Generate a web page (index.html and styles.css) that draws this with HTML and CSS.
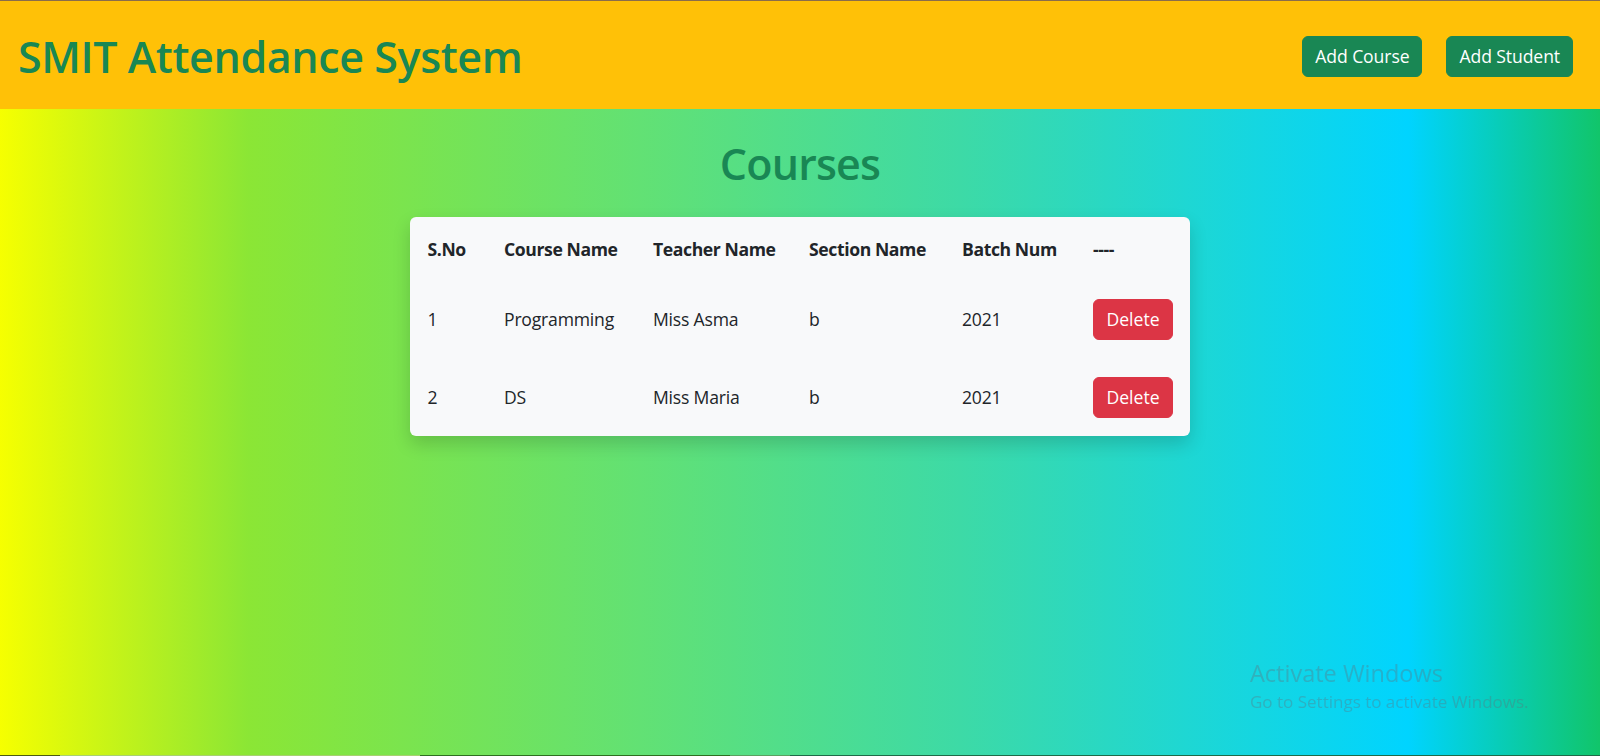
FILE: index.html
```html
<!DOCTYPE html>
<html lang="en">
<head>
<meta charset="utf-8">
<title>SMIT Attendance System</title>
<link rel="stylesheet" href="styles.css">
</head>
<body>
<header class="topbar">
  <h1 class="brand">SMIT Attendance System</h1>
  <nav class="actions">
    <button class="btn btn-success">Add Course</button>
    <button class="btn btn-success">Add Student</button>
  </nav>
</header>
<main class="content">
  <h2 class="page-title">Courses</h2>
  <div class="card">
    <table class="courses">
      <colgroup>
        <col class="c1"><col class="c2"><col class="c3"><col class="c4"><col class="c5"><col class="c6">
      </colgroup>
      <thead>
        <tr><th>S.No</th><th>Course Name</th><th>Teacher Name</th><th>Section Name</th><th>Batch Num</th><th>----</th></tr>
      </thead>
      <tbody>
        <tr><td>1</td><td>Programming</td><td>Miss Asma</td><td>b</td><td>2021</td><td><button class="btn btn-danger">Delete</button></td></tr>
        <tr><td>2</td><td>DS</td><td>Miss Maria</td><td>b</td><td>2021</td><td><button class="btn btn-danger">Delete</button></td></tr>
      </tbody>
    </table>
  </div>
</main>
<div class="watermark">
  <div class="wm-title">Activate Windows</div>
  <div class="wm-sub">Go to Settings to activate Windows.</div>
</div>
<div class="bottom-strip"></div>
</body>
</html>
```
FILE: styles.css
```css
* { box-sizing: border-box; }
html, body { margin: 0; padding: 0; }
body {
  min-height: 100vh;
  font-family: "Open Sans", "Noto Sans", sans-serif;
  color: #212529;
  background: linear-gradient(to right, #f6ff00 0%, #8be635 15.5%, #62e174 40%, #3ddaa6 60%, #00d4ff 88%, #11c56a 100%);
  overflow: hidden;
}
.topbar {
  height: 109px;
  border-top: 1px solid #8a6d4b;
  background: #ffc107;
  display: flex;
  align-items: center;
  justify-content: space-between;
  padding: 0 27px 0 18px;
}
.brand {
  margin: 0;
  font-size: 43px;
  font-weight: 600;
  color: #198754;
  line-height: 1.2;
  letter-spacing: -0.4px;
  padding-top: 3px;
}
.actions { display: flex; gap: 24px; margin-top: 2px; }
.btn {
  font-family: inherit;
  font-size: 17.6px;
  line-height: 1.5;
  border: 1px solid transparent;
  border-radius: 6px;
  color: #fff;
  cursor: pointer;
}
.btn-success {
  background: #198754;
  border-color: #198754;
  height: 41px;
  padding: 0 12px;
  letter-spacing: -0.1px;
}
.btn-danger {
  background: #dc3545;
  border-color: #dc3545;
  height: 41px;
  width: 80px;
  padding: 0;
  display: block;
}
.content {
  display: flex;
  flex-direction: column;
  align-items: center;
}
.page-title {
  margin: 29px 0 0;
  font-size: 43px;
  font-weight: 600;
  line-height: 1.2;
  letter-spacing: -0.8px;
  color: #198754;
  height: 79px;
}
.card {
  width: 780px;
  background: #f8f9fa;
  border-radius: 6px;
  box-shadow: 0 8px 18px rgba(0, 0, 0, 0.16);
  overflow: hidden;
}
.courses {
  width: 100%;
  border-collapse: collapse;
  table-layout: fixed;
  font-size: 17.6px;
}
.c1 { width: 76.5px; }
.c2 { width: 149px; }
.c3 { width: 156px; }
.c4 { width: 153px; }
.c5 { width: 131px; }
.c6 { width: 114.5px; }
.courses th, .courses td {
  text-align: left;
  padding: 0 17.5px;
  vertical-align: middle;
  white-space: nowrap;
}
.courses th { font-weight: 700; height: 63px; padding-top: 1px; letter-spacing: -0.4px; }
.courses td { height: 78px; letter-spacing: -0.2px; }
.watermark {
  position: fixed;
  left: 1250px;
  top: 657px;
  color: rgba(100, 110, 120, 0.35);
  font-family: "Open Sans", "Noto Sans", sans-serif;
}
.wm-title { font-size: 23.5px; line-height: 32px; }
.wm-sub { font-size: 17px; line-height: 26px; }
.bottom-strip {
  position: fixed;
  left: 0;
  right: 0;
  bottom: 0;
  height: 1px;
  background: linear-gradient(to right, #4a5a10 0 60px, #a8d070 60px 420px, #2e6e20 420px 730px, #5aa060 730px 790px, #1f6a48 790px 100%);
}
```
